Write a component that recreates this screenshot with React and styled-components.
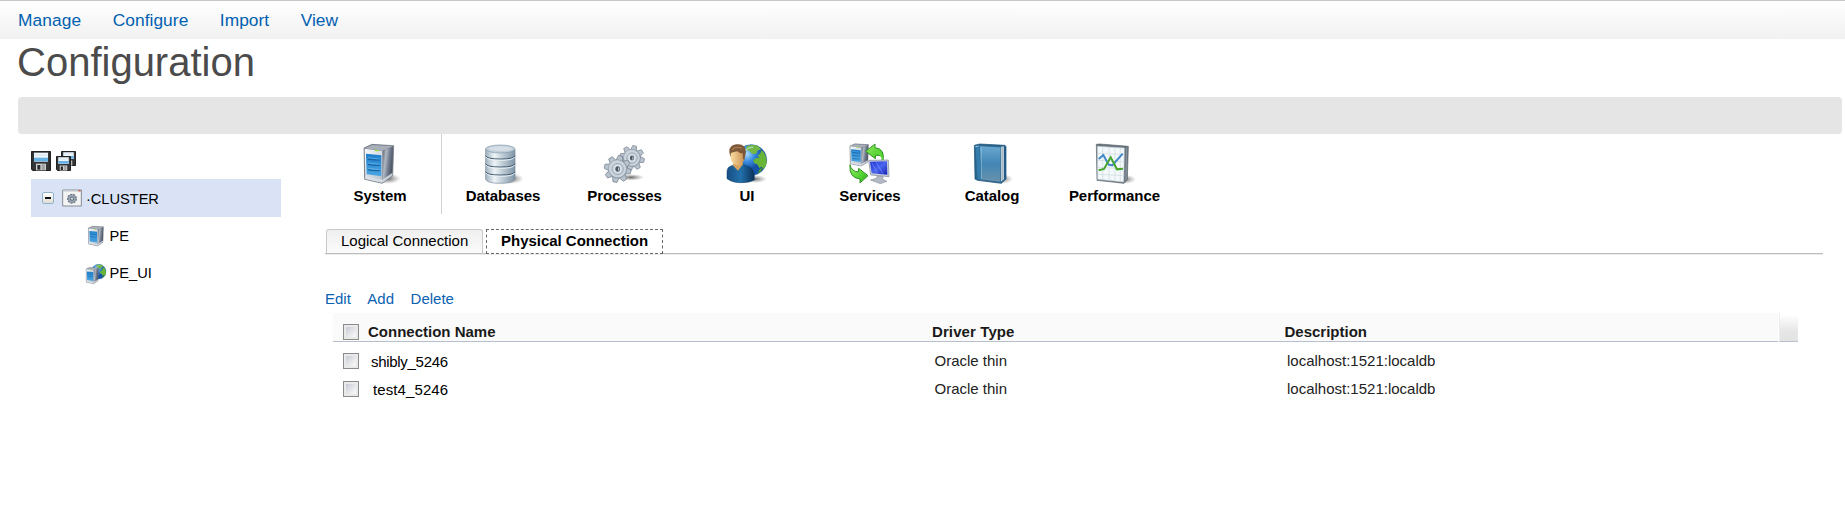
import React from "react";
import styled, { createGlobalStyle } from "styled-components";

const GlobalStyle = createGlobalStyle`
  * { box-sizing: border-box; }
  body {
    margin: 0;
    background: #fff;
    color: #000;
    font: 15px/20px "Liberation Sans", Arial, sans-serif;
  }
`;

const Page = styled.div`
  height: 516px;
  overflow: hidden;
`;

const MenuBar = styled.nav`
  display: flex;
  gap: 31.5px;
  height: 39px;
  padding-left: 18px;
  border-top: 1px solid #c6c6c6;
  background: linear-gradient(#fff, #f1f1f1);
`;

const MenuLink = styled.a`
  color: #0060b0;
  font-size: 17.33px;
  letter-spacing: ${(p) => p.$spacing || 0}px;
  line-height: 38px;
`;

const Title = styled.h1`
  height: 58px;
  margin: 0;
  padding-left: 17px;
  color: #4b4b4b;
  font-size: 40px;
  font-weight: 400;
  line-height: 47px;
`;

const Banner = styled.div`
  height: 37px;
  margin: 0 3px 0 18px;
  border-radius: 4px;
  background: #e5e5e5;
`;

const Columns = styled.div`
  display: flex;
`;

const Sidebar = styled.aside`
  width: 250px;
  margin: 17px 44px 0 31px;
  font-size: 14.67px;
`;

const SaveBar = styled.div`
  display: flex;
  gap: 5px;
  height: 28px;
`;

const TreeRow = styled.div`
  display: flex;
  align-items: center;
  height: 38px;
  padding-left: ${(p) => p.$indent}px;
  background: ${(p) => (p.$selected ? "#d9e3f5" : "transparent")};
`;

const TreeLabel = styled.span`
  padding-left: ${(p) => p.$gap}px;
  padding-top: ${(p) => p.$drop || 0}px;
  padding-bottom: ${(p) => p.$lift || 0}px;
  letter-spacing: ${(p) => p.$spacing || 0}px;
`;

const Toggle = styled.span`
  display: flex;
  align-items: center;
  justify-content: center;
  width: 12px;
  height: 12px;
  margin-right: 8px;
  border: 1px solid #8fb3cd;
  border-radius: 2px;
  background: linear-gradient(#fff, #e2ddd3);
  &::after {
    content: "";
    width: 6px;
    height: 1.5px;
    background: #111;
  }
`;

const Main = styled.main`
  width: 1498px;
`;

const Toolbar = styled.div`
  display: flex;
  height: 80px;
`;

const Tool = styled.button`
  display: flex;
  flex-direction: column;
  align-items: center;
  width: ${(p) => p.$width}px;
  height: 80px;
  padding: ${(p) => (p.$first ? "10px 6px 0 0" : "10px 0 0")};
  border: 0;
  border-right: ${(p) => (p.$first ? "1px solid #d2d2d2" : "0")};
  background: none;
  color: #000;
  font: bold 15px/20px "Liberation Sans", Arial, sans-serif;
  letter-spacing: -0.05px;
  svg { flex: none; margin-bottom: 2px; }
`;

const Tabs = styled.div`
  display: flex;
  align-items: flex-end;
  gap: 3px;
  height: 41px;
  padding-left: 1px;
  background: linear-gradient(#bdbdbd 50%, #ececec 50%) bottom / 100% 2px no-repeat;
`;

const Tab = styled.div`
  width: ${(p) => p.$width}px;
  height: 25px;
  margin-bottom: 1px;
  padding-left: 14px;
  border: 1px solid #c9c9c9;
  border-bottom-color: #bdbdbd;
  border-radius: 3px 3px 0 0;
  background: linear-gradient(#efefef, #fbfbfb);
  line-height: 22px;
  letter-spacing: -0.02px;
  white-space: nowrap;
`;

const ActiveTab = styled(Tab)`
  border: 1px dashed #666;
  border-radius: 0;
  background: #fff;
  font-weight: bold;
`;

const Actions = styled.div`
  display: flex;
  gap: 16.5px;
  height: 58px;
  padding-top: 34px;
  color: #0a62b0;
`;

const Grid = styled.div`
  width: 1465px;
  margin-left: 8px;
`;

const HeaderRow = styled.div`
  display: flex;
  height: 29px;
`;

const HeaderCells = styled.div`
  display: flex;
  align-items: flex-start;
  width: 1445px;
  padding: 9px 0 0 10px;
  border-bottom: 1px solid #b7bfcc;
  background: #fafafa;
  color: #1a1a1a;
  font-weight: bold;
`;

const HeaderEnd = styled.div`
  width: 19px;
  margin-left: 1px;
  border-bottom: 1px solid #b7bfcc;
  border-left: 1px solid #eee;
  background: linear-gradient(#fff 5%, #e6e6e6 65%, #e3e3e3);
`;

const Row = styled.div`
  display: flex;
  height: 28px;
  padding: 9px 0 0 10px;
  color: #222;
`;

const Check = styled.span`
  flex: none;
  width: 16px;
  height: 16px;
  margin-top: ${(p) => p.$drop || 0}px;
  border: 1px solid #8b8b8b;
  background: linear-gradient(135deg, #c7cbd5, #f5f5f5 85%) center / 10px 10px no-repeat, #e9e9e9;
`;

const Cell = styled.span`
  width: ${(p) => p.$width}px;
  padding-left: ${(p) => p.$pad}px;
  padding-top: ${(p) => p.$drop || 0}px;
  letter-spacing: ${(p) => p.$spacing || 0}px;
  color: ${(p) => p.$color || "inherit"};
`;

function Icon({ size = 40, children }) {
  const box = size * 3;
  return (
    <svg width={size} height={size} viewBox={`0 0 ${box} ${box}`} overflow="visible">
      {children}
    </svg>
  );
}

const GradientStore = styled.svg`
  display: block;
`;

function Gradients() {
  return (
    <GradientStore width="0" height="0">
      <defs>
        <linearGradient id="steel" x2="1" y2="0.4">
          <stop stopColor="#58616f" /><stop offset=".35" stopColor="#b1b8c3" />
          <stop offset=".65" stopColor="#737e91" /><stop offset="1" stopColor="#4a5261" />
        </linearGradient>
        <linearGradient id="silver" x2="1" y2="1">
          <stop stopColor="#f8fafc" /><stop offset="1" stopColor="#b5bfca" />
        </linearGradient>
        <linearGradient id="drum">
          <stop stopColor="#9fb2bf" /><stop offset=".3" stopColor="#edf4f7" />
          <stop offset=".62" stopColor="#b8c7d1" /><stop offset="1" stopColor="#7f94a4" />
        </linearGradient>
        <linearGradient id="blue" x2="0" y2="1">
          <stop stopColor="#1b7dcc" /><stop offset="1" stopColor="#4ba6e2" />
        </linearGradient>
        <radialGradient id="gear" cx=".4" cy=".4">
          <stop stopColor="#e8edf1" /><stop offset=".7" stopColor="#c3ccd6" /><stop offset="1" stopColor="#98a5b3" />
        </radialGradient>
        <radialGradient id="globe" cx=".35" cy=".3">
          <stop stopColor="#a9dcff" /><stop offset=".5" stopColor="#3a8de0" /><stop offset="1" stopColor="#1553a6" />
        </radialGradient>
        <linearGradient id="green" x2="1" y2="1">
          <stop stopColor="#9bea65" /><stop offset=".6" stopColor="#53d332" /><stop offset="1" stopColor="#2fa31d" />
        </linearGradient>
        <linearGradient id="skin">
          <stop stopColor="#fbe3a4" /><stop offset="1" stopColor="#c98a4e" />
        </linearGradient>
        <linearGradient id="shirt" x2="1">
          <stop stopColor="#174f84" /><stop offset=".5" stopColor="#2270ab" /><stop offset="1" stopColor="#0b3157" />
        </linearGradient>
        <linearGradient id="screen" x2="1" y2="1">
          <stop stopColor="#1b2bd0" /><stop offset=".5" stopColor="#4a66ee" /><stop offset="1" stopColor="#1824b6" />
        </linearGradient>
        <linearGradient id="book" x2="0" y2="1">
          <stop stopColor="#69a8cf" /><stop offset=".5" stopColor="#4386b5" /><stop offset="1" stopColor="#6992ac" />
        </linearGradient>
        <radialGradient id="shade">
          <stop stopColor="#333" stopOpacity=".75" /><stop offset="1" stopColor="#777" stopOpacity="0" />
        </radialGradient>
      </defs>
    </GradientStore>
  );
}

const Shade = ({ x = 82, y = 102, rx = 38, ry = 16 }) => (
  <ellipse cx={x} cy={y} rx={rx} ry={ry} fill="url(#shade)" />
);

const Tower = ({ lines = 3 }) => (
  <g>
    <path d="M12 12 36 1 101 5 98 96 67 118 14 106Z" fill="#79818e" stroke="#626975" strokeWidth="2" />
    <path d="M14 13 37 3 98 7 68 20Z" fill="#a9afb9" />
    <path d="M68 21 99 8 96 94 68 115Z" fill="url(#steel)" />
    <path d="M14 14 67 21 67 116 16 105Z" fill="url(#silver)" />
    <path d="M18 29 64 34 64 97 20 91Z" fill="url(#blue)" />
    {[0, 1, 2].slice(0, lines).map((n) => (
      <g key={n} fill="none" strokeWidth="3">
        <path d={`M24 ${45 + n * 16}q14 4 36 3`} stroke="#155b95" />
        <path d={`M24 ${41 + n * 16}l35 4`} stroke="#80c6f5" strokeWidth="1.5" />
      </g>
    ))}
    <path d="M44 19 55 20" stroke="#9be02d" strokeWidth="4" />
    <path d="M15 96 67 107 97 86V95L68 116 16 105Z" fill="#dce1e8" opacity=".8" />
  </g>
);

const SystemIcon = () => <Icon><Shade x={84} y={104} /><Tower /></Icon>;

const DatabaseIcon = () => (
  <Icon>
    <Shade y={104} x={84} />
    <path d="M8 15V106Q12 118 52 118T96 106V15Z" fill="url(#drum)" stroke="#77899a" strokeWidth="2" />
    {[39, 63, 87].map((y) => (
      <g key={y} fill="none">
        <path d={`M8 ${y - 4}q3 10 44 10t44-10`} stroke="#455e73" strokeWidth="3" />
        <path d={`M9 ${y}q4 10 43 10t43-10`} stroke="#e9f0f5" strokeWidth="3" />
      </g>
    ))}
    <ellipse cx="52" cy="15" rx="44" ry="12" fill="#c0ced9" stroke="#8498a8" strokeWidth="2" />
    <ellipse cx="52" cy="14" rx="35" ry="7" fill="#d5dfe7" />
  </Icon>
);

function Gear({ cx, cy, r }) {
  return (
    <g transform={`translate(${cx} ${cy}) scale(${r / 40})`}>
      {[0, 45, 90, 135, 180, 225, 270, 315].map((a) => (
        <path key={a} transform={`rotate(${a + 12})`} d="M-10-25-6-40H6L10-25Z" fill="#b9c4ce" stroke="#74818f" strokeWidth="2.2" strokeLinejoin="round" />
      ))}
      <circle r="28" fill="url(#gear)" stroke="#8a97a5" strokeWidth="1.5" />
      <circle r="25" fill="#ccd5dd" />
      <circle r="17" fill="#c4ced8" stroke="#96a3b0" strokeWidth="2.5" />
      <circle r="12" fill="#dde4e9" />
      <ellipse rx="7" ry="8" fill="#4c5966" />
      <path d="M1-6 6 0 1 7Z" fill="#b7c2cc" />
    </g>
  );
}

const ProcessIcon = () => (
  <Icon>
    <Shade x={78} y={100} rx={40} ry={10} />
    <Gear cx={81} cy={42} r={37} />
    <Gear cx={38} cy={75} r={40} />
  </Icon>
);

const Globe = () => (
  <g>
    <circle cx="73" cy="48" r="46" fill="url(#globe)" stroke="#2867a3" strokeWidth="2" />
    <path d="M60 6Q78-1 94 7L103 17 92 19 88 29 76 30 67 21 55 17Z" fill="#73b747" />
    <path d="M104 18Q122 37 118 61L111 75 103 68 97 72 91 61 81 57 79 48 89 42 97 43 92 34 99 30Z" fill="#69b535" />
    <path d="M98 75 108 70Q102 86 92 89Z" fill="#4a972c" />
    <path d="M52 24Q62 9 78 10" fill="none" stroke="#d7efff" strokeWidth="4" opacity=".6" />
  </g>
);

const PersonIcon = () => (
  <Icon>
    <Shade x={82} y={105} rx={38} ry={12} />
    <Globe />
    <path d="M0 83Q0 68 15 65L25 59 47 58Q52 67 66 68 79 73 82 92V108Q66 117 45 116 17 117 0 104Z" fill="url(#shirt)" stroke="#0c3b65" strokeWidth="1.5" />
    <path d="M17 64 33 80 49 59 43 52 22 53Z" fill="#d9a45f" />
    <path d="M8 21Q12 3 34 3 57 5 55 31L50 51Q40 65 30 64 17 60 12 47Z" fill="url(#skin)" />
    <path d="M7 23Q7 3 28 1 55-3 57 23L52 48 48 45 47 28Q37 29 31 22 20 24 12 27L10 40Z" fill="#7d5839" />
    <path d="M15 17Q26 6 45 13" fill="none" stroke="#a87c53" strokeWidth="4" />
  </Icon>
);

const ServicesIcon = () => (
  <Icon>
    <g transform="translate(-8 -1) scale(.63 .57)"><Tower /></g>
    <path d="M99 53Q102 31 77 34L76 44 47 22 75 0 75 11Q107 14 98 53Z" fill="url(#green)" stroke="#329326" strokeWidth="3" />
    <path d="M94 54Q98 27 70 28L70 17Q104 18 98 54Z" fill="#63d83d" />
    <path d="M0 62Q4 82 25 84L26 73 54 95 30 117 30 105Q-4 101 0 62Z" fill="url(#green)" stroke="#329326" strokeWidth="3" />
    <path d="M56 49 115 48 117 98 62 93Z" fill="#c9d0da" stroke="#7d8797" strokeWidth="2" />
    <path d="M60 53 111 52 112 92 65 88Z" fill="url(#screen)" />
    <path d="M65 55 82 87M78 54 99 89" stroke="#8199ff" strokeWidth="3" opacity=".6" />
    <path d="M82 96 99 98 98 106 111 112 91 119 61 108 79 103Z" fill="#b3bac3" stroke="#79818b" strokeWidth="1.5" />
  </Icon>
);

const BookIcon = () => (
  <Icon>
    <Shade x={87} y={105} rx={36} ry={15} />
    <path d="M7 4 23 0 99 4 102 8V105L88 118 16 109 9 105Z" fill="#2a658f" stroke="#174c73" strokeWidth="2" />
    <path d="M84 9 97 7V104L86 114Z" fill="#d6e0e5" />
    <path d="M91 9V108" stroke="#8399a8" strokeWidth="2" />
    <path d="M22 5 86 9V115L26 108Z" fill="url(#book)" stroke="#275f88" strokeWidth="2" />
    <path d="M11 7 22 5 27 108 16 104Z" fill="#347ca9" />
    <path d="M10 8 20 6" stroke="#9ccce8" strokeWidth="3" />
    <path d="M28 11V104" stroke="#93c2dc" strokeWidth="2" />
    <path d="M98 7V104" stroke="#205986" strokeWidth="5" />
  </Icon>
);

const ChartIcon = () => (
  <Icon>
    <Shade x={88} y={106} rx={35} ry={14} />
    <path d="M4 1 15 0 100 7 97 107 87 118 6 109Z" fill="#69747d" stroke="#59646c" strokeWidth="2" />
    <path d="M7 7 88 12 86 114 8 106Z" fill="#f3f8fa" stroke="#bac9d0" strokeWidth="2" />
    <path d="M23 9V106M42 10V108M60 11V110M76 12V112M9 28 88 32M9 49 88 53M9 70 88 74M9 91 88 95" stroke="#cfdae0" strokeWidth="2" />
    <path d="M11 45 25 33 41 62 52 64 83 29" fill="none" stroke="#4188c8" strokeWidth="6" />
    <path d="M11 79 27 75 47 40 66 76 84 74" fill="none" stroke="#46a52c" strokeWidth="6" />
    <path d="M95 11 93 109" stroke="#85919a" strokeWidth="4" />
  </Icon>
);

const Disk = () => (
  <g>
    <path d="M2 2H58V58H6L2 54Z" fill="#343638" stroke="#222" strokeWidth="4" strokeLinejoin="round" />
    <path d="M9 5H51V32H9Z" fill="#eef6fb" />
    <path d="M9 20H51V31H9Z" fill="#67b2e5" />
    <path d="M9 12H51" stroke="#c8d5dc" strokeWidth="2" />
    <path d="M15 38H45V58H15Z" fill="#d0d1d1" />
    <path d="M19 42H28V56H19Z" fill="#292b2d" />
    <path d="M32 40H42V57H32Z" fill="#a3a5a7" />
  </g>
);

const SaveIcon = () => <Icon size={20}><Disk /></Icon>;

const SaveAllIcon = () => (
  <Icon size={20}>
    <g transform="translate(15 0) scale(.75)"><Disk /></g>
    <g transform="translate(0 15) scale(.75)"><Disk /></g>
  </Icon>
);

const ClusterIcon = () => (
  <Icon size={20}>
    <path d="M2 6H58V54H2Z" fill="#f4f4f4" stroke="#858c92" strokeWidth="3" />
    <path d="M3 8H57" stroke="#c2c8cd" strokeWidth="5" />
    <path d="M49 8H56" stroke="#cf5549" strokeWidth="4" />
    <circle cx="30" cy="32" r="13" fill="#9ba7b3" stroke="#6c7986" strokeWidth="4" strokeDasharray="6 3" />
    <circle cx="30" cy="32" r="5" fill="#dce4ea" stroke="#596673" strokeWidth="3" />
  </Icon>
);

const ServerIcon = () => (
  <Icon size={20}><g transform="translate(-2 0) scale(.51)"><Tower lines={2} /></g></Icon>
);

const ServerGlobeIcon = () => (
  <Icon size={20}>
    <g transform="translate(3 0) scale(.48)"><Globe /></g>
    <g transform="translate(-5 10) scale(.42)"><Tower lines={2} /></g>
  </Icon>
);

const tools = [
  ["System", SystemIcon, 117],
  ["Databases", DatabaseIcon, 122],
  ["Processes", ProcessIcon, 121],
  ["UI", PersonIcon, 124],
  ["Services", ServicesIcon, 122],
  ["Catalog", BookIcon, 122],
  ["Performance", ChartIcon, 123],
];

const connections = [
  { name: "shibly_5246", pad: 12, spacing: -0.3, driver: "Oracle thin", description: "localhost:1521:localdb" },
  { name: "test4_5246", pad: 14, spacing: 0.1, driver: "Oracle thin", description: "localhost:1521:localdb" },
];

export default function App() {
  return (
    <Page>
      <GlobalStyle />
      <MenuBar>
        <MenuLink $spacing={0.1}>Manage</MenuLink>
        <MenuLink $spacing={0.05}>Configure</MenuLink>
        <MenuLink $spacing={0.05}>Import</MenuLink>
        <MenuLink>View</MenuLink>
      </MenuBar>
      <Title>Configuration</Title>
      <Banner />
      <Columns>
        <Sidebar>
          <SaveBar><SaveIcon /><SaveAllIcon /></SaveBar>
          <TreeRow $selected $indent={11}>
            <Toggle /><ClusterIcon /><TreeLabel $gap={4} $drop={2} $spacing={-0.05}>·CLUSTER</TreeLabel>
          </TreeRow>
          <TreeRow $indent={56}><ServerIcon /><TreeLabel $gap={2.5} $lift={1}>PE</TreeLabel></TreeRow>
          <TreeRow $indent={55}><ServerGlobeIcon /><TreeLabel $gap={3.5} $lift={2}>PE_UI</TreeLabel></TreeRow>
        </Sidebar>
        <Main>
          <Toolbar>
            {tools.map(([label, Picture, width], i) => (
              <Tool key={label} $width={width} $first={i === 0}><Picture />{label}</Tool>
            ))}
          </Toolbar>
          <Tabs>
            <Tab $width={157}>Logical Connection</Tab>
            <ActiveTab $width={177}>Physical Connection</ActiveTab>
          </Tabs>
          <Actions><span>Edit</span><span>Add</span><span>Delete</span></Actions>
          <Grid>
            <HeaderRow>
              <HeaderCells>
                <Check $drop={2} />
                <Cell $width={564} $pad={9}>Connection Name</Cell>
                <Cell $width={353} $pad={9} $spacing={0.1}>Driver Type</Cell>
                <Cell $width={300} $pad={8.5}>Description</Cell>
              </HeaderCells>
              <HeaderEnd />
            </HeaderRow>
            {connections.map((c) => (
              <Row key={c.name}>
                <Check $drop={2} />
                <Cell $width={564} $pad={c.pad} $drop={1} $spacing={c.spacing} $color="#000">{c.name}</Cell>
                <Cell $width={353} $pad={11.5}>{c.driver}</Cell>
                <Cell $width={300} $pad={11}>{c.description}</Cell>
              </Row>
            ))}
          </Grid>
        </Main>
      </Columns>
      <Gradients />
    </Page>
  );
}
